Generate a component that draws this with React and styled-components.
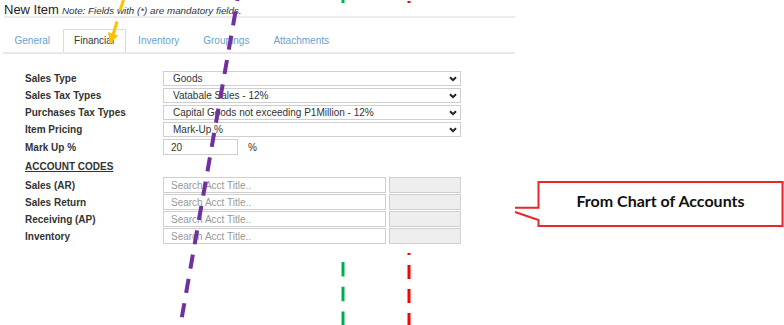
import React from 'react';
import styled, { createGlobalStyle } from 'styled-components';

const GlobalStyle = createGlobalStyle`
  body {
    margin: 0;
    background: #fff;
    font-family: "Liberation Sans", Arial, sans-serif;
  }
`;

const Stage = styled.div`
  position: relative;
  width: 784px;
  height: 325px;
  overflow: hidden;
  background: #fff;
  padding-top: 3px;
  box-sizing: border-box;
`;

const Layer = styled.svg`
  position: absolute;
  left: 0;
  top: 0;
  z-index: ${p => p.$z};
  pointer-events: none;
`;

const Panel = styled.div`
  position: relative;
  z-index: 1;
  width: 515px;
  height: 250px;
  background: #fff;
  padding-left: 4px;
  box-sizing: border-box;
`;

const Header = styled.div`
  display: flex;
  align-items: baseline;
  gap: 3px;
  height: 13px;
  line-height: 13px;
  border-bottom: 2px solid #ececec;
`;

const Title = styled.span`
  font-size: 13px;
  color: #222;
`;

const Note = styled.span`
  font-size: 9.8px;
  font-style: italic;
  color: #333;
`;

const Tabs = styled.div`
  display: flex;
  margin-top: 11px;
  margin-left: -1px;
  border-bottom: 2px solid #e8e8e8;
`;

const Tab = styled.div`
  height: 23px;
  line-height: 22px;
  padding: 0 10.5px;
  margin-right: 1px;
  font-size: 10px;
  box-sizing: border-box;
  color: ${p => (p.$active ? '#333' : '#6a9fd0')};
  border: 1px solid ${p => (p.$active ? '#dcdcdc' : 'transparent')};
  border-bottom: none;
  background: #fff;
`;

const Form = styled.div`
  display: grid;
  grid-template-columns: 138px 298px;
  grid-template-rows: 17px 17px 17px 17px 17px 21px 17px 17px 17px 17px;
  align-items: start;
  padding-left: 21px;
  margin-top: 17px;
`;

const Label = styled.div`
  font-size: 10px;
  font-weight: bold;
  color: #333;
  display: flex;
  align-items: center;
  height: ${p => p.$h || 15}px;
`;

const Heading = styled(Label)`
  text-decoration: underline;
  grid-column: 1 / 3;
`;

const SelectBox = styled.div`
  height: 15px;
  border: 1px solid #cfcfcf;
  box-sizing: border-box;
  display: flex;
  align-items: center;
  justify-content: space-between;
  padding: 0 3px 0 9px;
  font-size: 10px;
  color: #333;
  background: #fff;
`;

const InputRow = styled.div`
  display: flex;
  align-items: center;
  gap: ${p => p.$gap || 3}px;
`;

const Input = styled.div`
  width: ${p => p.$w}px;
  height: 16px;
  border: 1px solid #cfcfcf;
  box-sizing: border-box;
  display: flex;
  align-items: center;
  padding-left: 7px;
  font-size: 10px;
  color: ${p => (p.$placeholder ? '#999' : '#333')};
  background: ${p => (p.$disabled ? '#eeeeee' : '#fff')};
`;

const Unit = styled.span`
  font-size: 10px;
  color: #333;
`;

const Callout = styled.div`
  position: absolute;
  left: 514px;
  top: 180px;
  width: 270px;
  height: 48px;
  z-index: 2;
`;

const CalloutText = styled.div`
  position: absolute;
  left: 25px;
  top: 2px;
  right: 2px;
  bottom: 10px;
  display: flex;
  align-items: center;
  justify-content: center;
  font-family: Lato, "Liberation Sans", sans-serif;
  font-weight: bold;
  font-size: 16px;
  color: #111;
`;

const Chevron = () => (
  <svg width="8" height="6" viewBox="0 0 8 6">
    <path d="M1 1.2 L4 4.2 L7 1.2" fill="none" stroke="#222" strokeWidth="2" />
  </svg>
);

const selects = [
  ['Sales Type', 'Goods'],
  ['Sales Tax Types', 'Vatabale Sales - 12%'],
  ['Purchases Tax Types', 'Capital Goods not exceeding P1Million - 12%'],
  ['Item Pricing', 'Mark-Up %'],
];

const accounts = ['Sales (AR)', 'Sales Return', 'Receiving (AP)', 'Inventory'];

export default function App() {
  return (
    <>
      <GlobalStyle />
      <Stage>
        <Layer $z={0} width="784" height="325">
          <line x1="343" y1="0" x2="343" y2="325" stroke="#00b050" strokeWidth="3"
            strokeDasharray="14.5 10.2" strokeDashoffset="9.7" />
          <line x1="409" y1="0" x2="409" y2="325" stroke="#ff0000" strokeWidth="3"
            strokeDasharray="14 10" strokeDashoffset="23" />
        </Layer>

        <Panel>
          <Header>
            <Title>New Item</Title>
            <Note>Note: Fields with (*) are mandatory fields.</Note>
          </Header>

          <Tabs>
            <Tab>General</Tab>
            <Tab $active>Financial</Tab>
            <Tab>Inventory</Tab>
            <Tab>Groupings</Tab>
            <Tab>Attachments</Tab>
          </Tabs>

          <Form>
            {selects.map(([label, value]) => (
              <React.Fragment key={label}>
                <Label>{label}</Label>
                <SelectBox>
                  {value}
                  <Chevron />
                </SelectBox>
              </React.Fragment>
            ))}
            <Label $h={16}>Mark Up %</Label>
            <InputRow $gap={10}>
              <Input $w={75}>20</Input>
              <Unit>%</Unit>
            </InputRow>
            <Heading $h={21}>ACCOUNT CODES</Heading>
            {accounts.map(a => (
              <React.Fragment key={a}>
                <Label $h={16}>{a}</Label>
                <InputRow>
                  <Input $w={224} $placeholder>Search Acct Title..</Input>
                  <Input $w={72} $disabled />
                </InputRow>
              </React.Fragment>
            ))}
          </Form>
        </Panel>

        <Callout>
          <svg width="270" height="48" viewBox="0 0 270 48">
            <path d="M1 27.7 H24.5 V2 H268.5 V46 H24.5 V40 L1 32"
              fill="#fff" stroke="#e8262b" strokeWidth="2" />
          </svg>
          <CalloutText>From Chart of Accounts</CalloutText>
        </Callout>

        <Layer $z={3} width="784" height="325">
          <line x1="237.5" y1="0" x2="180.5" y2="325" stroke="#7030a0" strokeWidth="4"
            strokeDasharray="14.2 10.5" strokeDashoffset="13.2" />
          <line x1="123.5" y1="0" x2="120" y2="10.5" stroke="#ffc000" strokeWidth="3" />
          <line x1="117" y1="21.5" x2="113" y2="35" stroke="#ffc000" strokeWidth="3" />
          <polygon points="108,32 118,35.5 110,44" fill="#ffc000" />
        </Layer>
      </Stage>
    </>
  );
}
